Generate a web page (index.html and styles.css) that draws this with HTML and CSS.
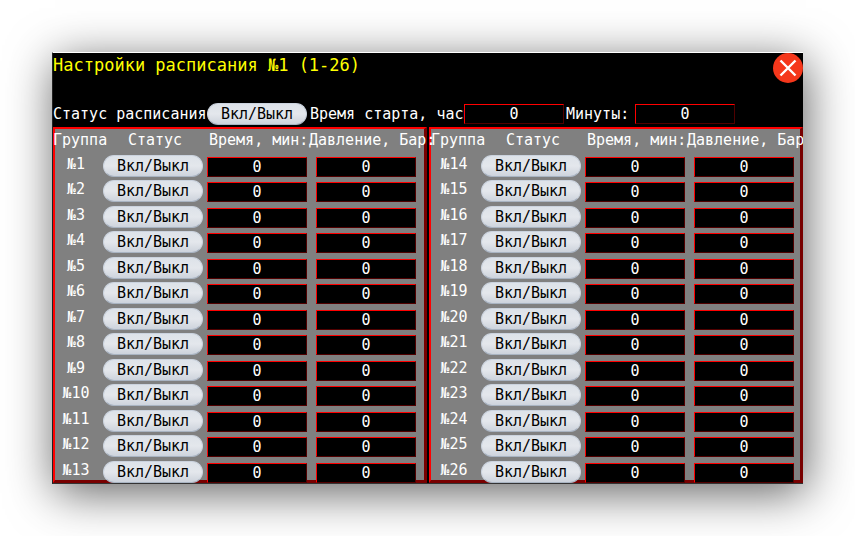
FILE: index.html
```html
<!DOCTYPE html>
<html lang="ru">
    <head>
        <meta charset="utf-8">
        <title>Настройки расписания</title>
        <link rel="stylesheet" href="styles.css">
    </head>
    <body>
        <main class="screen">
            <header class="header">
                <h1 class="title">Настройки расписания №1 (1-26)</h1>
                <button class="close" aria-label="Закрыть">
                    <svg viewBox="0 0 30 30" width="30" height="30">
                        <circle cx="15" cy="15" r="15" fill="#f5371b"/>
                        <path d="M7.5 7.5L22.5 22.5M22.5 7.5L7.5 22.5" stroke="#fff" stroke-width="2.4"/>
                    </svg>
                </button>
            </header>

            <div class="start">
                <span class="start-status">Статус расписания</span>
                <button class="toggle">Вкл/Выкл</button>
                <label class="start-hours" for="hours">Время старта, часы:</label>
                <input class="field" id="hours" value="0">
                <label class="start-minutes" for="minutes">Минуты:</label>
                <input class="field" id="minutes" value="0">
            </div>

            <div class="panels">
                <section class="panel">
                    <table class="groups">
                        <thead>
                            <tr>
                                <th class="col-group">Группа</th>
                                <th class="col-status">Статус</th>
                                <th class="col-time">Время, мин:</th>
                                <th class="col-pressure">Давление, Бар:</th>
                            </tr>
                        </thead>
                        <tbody id="groups-left"></tbody>
                    </table>
                </section>
                <section class="panel panel-right">
                    <table class="groups">
                        <thead>
                            <tr>
                                <th class="col-group">Группа</th>
                                <th class="col-status">Статус</th>
                                <th class="col-time">Время, мин:</th>
                                <th class="col-pressure">Давление, Бар:</th>
                            </tr>
                        </thead>
                        <tbody id="groups-right"></tbody>
                    </table>
                </section>
            </div>
        </main>

        <script>
            function addGroups(id, first, last) {
                let rows = '';
                for (let i = first; i <= last; i++) {
                    rows += `<tr>
                        <td class="number">№${i}</td>
                        <td><button class="toggle">Вкл/Выкл</button></td>
                        <td><input class="field" value="0" aria-label="Время, группа ${i}"></td>
                        <td class="pressure"><input class="field" value="0" aria-label="Давление, группа ${i}"></td>
                    </tr>`;
                }
                document.getElementById(id).innerHTML = rows;
            }

            addGroups('groups-left', 1, 13);
            addGroups('groups-right', 14, 26);
        </script>
    </body>
</html>
```

FILE: styles.css
```css
* {
    box-sizing: border-box;
}
body {
    margin: 0;
    padding: 52px;
    background-color: white;
    color: white;
    font-family: "DejaVu Sans Mono", monospace;
    font-size: 15px;
    line-height: 18px;
}
.screen {
    overflow: hidden;
    background-color: black;
    border-top: 1px solid white;
    border-left: 1px solid #222;
    border-bottom: 1px solid #333;
    box-shadow: 3px 9px 44px rgba(0, 0, 0, 0.62);
}
.header {
    display: flex;
    justify-content: space-between;
    align-items: flex-start;
    height: 50px;
}
.title {
    margin: 0;
    color: yellow;
    font-size: 17px;
    font-weight: normal;
    line-height: 24px;
}
.close {
    padding: 0;
    border: 0;
    background: none;
    cursor: pointer;
}
.close svg {
    display: block;
}

/* Start time row */
.start {
    display: flex;
    align-items: center;
    height: 24px;
    padding-bottom: 2px;
    white-space: nowrap;
}
.start-status {
    width: 154px;
}
.start-hours {
    width: 157px;
    padding-left: 3px;
    overflow: hidden;
}
.start-minutes {
    width: 71px;
    padding-left: 2px;
}

.toggle, .field {
    display: block;
    flex: none;
    width: 100px;
    padding: 0;
    font: inherit;
}
.toggle {
    height: 22px;
    border: 1px solid #cbd3de;
    border-bottom-color: #a9b4c2;
    border-radius: 11px;
    background: linear-gradient(#dde2e9, #e4e7ec 50%, #cdd3dc);
    color: black;
    cursor: pointer;
}
.field {
    height: 20px;
    border: 1px solid;
    border-color: red #500000 #500000 red;
    border-radius: 0;
    background-color: black;
    color: white;
    text-align: center;
}

/* Two panels with the groups */
.panels {
    display: flex;
    gap: 2px;
}
.panel {
    flex: 1;
    min-width: 0;
    background-color: gray;
    border: solid;
    border-width: 2px 3px 3px 2px;
    border-color: red #780000 #780000 red;
}
/* the table lies over the panel border */
.groups {
    position: relative;
    z-index: 1;
    width: 100%;
    margin: 0 0 -3px -2px;
    table-layout: fixed;
    border-collapse: collapse;
}
.panel-right .groups {
    margin-left: 0;
}
.groups th, .groups td {
    padding: 0;
    vertical-align: top;
}
.groups th {
    height: 26px;
    padding-top: 2px;
    font-weight: normal;
    text-align: left;
    white-space: nowrap;
}
.groups tbody tr {
    height: 25px;
}
.groups tbody tr:nth-child(even) {
    height: 26px;
}
.groups tbody tr:last-child {
    height: 22px;
}
.groups .col-group {
    width: 50px;
}
.groups .col-status {
    width: 104px;
    text-align: center;
}
.groups .col-time {
    width: 102px;
    padding-left: 2px;
}
.groups .number {
    padding-right: 4px;
    text-align: center;
}
.groups .field {
    margin-top: 2px;
}
.groups .pressure {
    padding-left: 7px;
}
```
